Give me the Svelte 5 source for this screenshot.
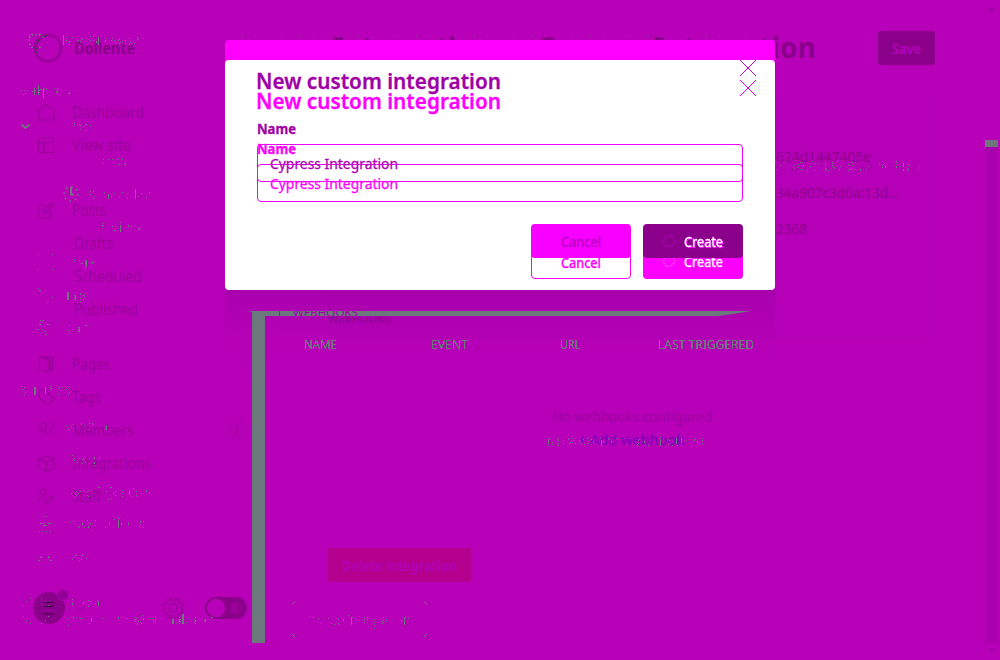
<script>
  const groups = [
    [['Dashboard', 72, 'home'], ['View site', 59, 'site']],
    [['Posts', 34, 'edit'], ['Drafts', 39, ''], ['Scheduled', 68, ''], ['Published', 64, '']],
    [['Pages', 38, 'pages'], ['Tags', 29, 'tag'], ['Members', 62, 'members'], ['Integrations', 79, 'box'], ['Staff', 29, 'staff']]
  ];
  const icons = {
    home: 'M1 6.5 8.5 .5 16 6.5V16H1Z',
    site: 'M2 1H14Q15.500 1 15.500 2.500V14Q15.500 15.500 14 15.500H2Q.5 15.500 .5 14V2.500Q.5 1 2 1ZM.5 5.500H15.500M6 5.500V15.500',
    edit: 'M8 3.500H1V16H13V9M6 11 6.500 8 14 .8 16 2.500 9 10Z',
    pages: 'M1.500 1 10 3.500V16L1.500 14ZM1.500 1H14.500V14H12V4L5 1',
    tag: 'M1 1H7L16 10 9.500 16 1 8Z',
    members: 'M5 1A3.500 3.500 0 1 1 5 8A3.500 3.500 0 1 1 5 1M12 1A3.500 3.500 0 1 1 12 8M1 13Q2 9.500 5 9.500T9 13M11 9.500Q15 9.500 16 13',
    box: 'M8.500 1 16 4V13L8.500 16 1 13V4ZM1 4 8.500 7.500 16 4M8.500 7.500V16',
    staff: 'M5 1A3 3 0 1 1 5 7A3 3 0 1 1 5 1M1 13Q1 9 5 9M7 16 8 12.500 14 8 16 10 10 15.500Z'
  };
  // text, x, baseline, width, size
  const traces = [
    ['My Browser', 62, 45, 84, 14], ['workplaces', 21, 95, 49, 12], ['Posts', 69, 131, 26, 12],
    ['Drafts', 97, 166, 29, 13], ['Scheduled', 88, 199, 64, 13], ['Published', 98, 232, 46, 13],
    ['Pages', 69, 267, 29, 12], ['Tags', 65, 300, 23, 12], ['Team', 62, 332, 29, 12],
    ['SETTINGS', 20, 395, 50, 12], ['General', 61, 430, 50, 13], ['Design', 67, 464, 37, 13],
    ['Code injection', 61, 497, 91, 13], ['Integrations', 63, 528, 82, 14], ['Labs', 67, 561, 21, 13],
    ['Ghost', 65, 607, 37, 13], ['ghost-author@example.com', 64, 624, 153, 13],
    ['71707cb3963.5f.ac94c5...', 775, 171, 156, 14],
    ['No webhooks configured', 546, 446, 159, 14], ['Delete integration', 307, 625, 104, 14]
  ];
  const heads = [['NAME', 304, 33], ['EVENT', 431, 37], ['URL', 560, 20], ['LAST TRIGGERED', 658, 96]];
  const rays = [0, 30, 60, 90, 120, 150, 180, 210, 240, 270, 300, 330];
</script>

{#snippet fit(text, w, h, base, size, weight)}
  <svg class="fit" width={w} height={h}><text x="0" y={base} font-size={size} font-weight={weight} textLength={w} lengthAdjust="spacingAndGlyphs">{text}</text></svg>
{/snippet}

{#snippet modal(kind)}
  <section class="modal {kind}">
    <div class="mhead">
      {@render fit('New custom integration', 245, 80, 49, 22, 600)}
      <svg class="close" width="18" height="18"><path d="M1 1 17 17M17 1 1 17" /></svg>
    </div>
    <div class="mlabel">{@render fit('Name', 39, 24, 14, 14, 700)}</div>
    <div class="field">{@render fit('Cypress Integration', 128, 36, 24, 15, 400)}</div>
    <div class="actions">
      <div class="btn cancel">{@render fit('Cancel', 40, 35, 23, 14, kind === 'first' ? 400 : 500)}</div>
      <div class="btn create">
        <svg class="spin" width="16" height="16" viewBox="-8 -8 16 16">
          {#each rays as r}<path d="M0 -4.500V-6.500" transform="rotate({r})" />{/each}
        </svg>
        {@render fit('Create', 39, 35, 23, 14, 400)}
      </div>
    </div>
  </section>
{/snippet}

<div class="stage">
  <aside>
    <div class="brand">
      <svg width="30" height="30"><circle cx="15" cy="15" r="13.200" fill="none" stroke="#9c009c" stroke-width="2.400" /><path d="M3 16Q4 5 14 2.500M3 20Q7 29 18 28M26 9Q30 17 23 25" fill="none" stroke="#940094" stroke-width="1.500" /><path d="M6 7 4 11M3.500 15v7M10 3h4" stroke="#164b34" stroke-width="1.400" stroke-dasharray="1.500 2" /></svg>
      {@render fit('Doliente', 61, 30, 21, 15.500, 700)}
    </div>
    <nav>
      {#each groups as items}
        <div class="group">
          {#each items as [name, w, icon]}
            <div class="item" class:sub={!icon}>
              <svg class="icon" width="17" height="17">{#if icon}<path d={icons[icon]} />{/if}</svg>
              {@render fit(name, w, 33, 22, 15.500, 400)}
              {#if name === 'Members'}<span class="count">{@render fit('1', 6, 22, 16, 13, 500)}</span>{/if}
            </div>
          {/each}
        </div>
      {/each}
    </nav>
    <footer>
      <svg width="230" height="44">
        <circle cx="17" cy="22" r="16" fill="#8a008a" />
        <circle cx="31" cy="9" r="6" fill="#b900b9" /><circle cx="31" cy="9" r="5.200" fill="#920098" />
        <path d="M12 16.500h10M12 20.500h10M12 28h5m1 0h4" stroke="#380044" /><path d="M12 24.500h10" stroke="#a000a6" />
        <path d="M42 20 48 25 53 20" fill="none" stroke="#9a009a" />
        <g transform="translate(141 22)" fill="none" stroke="#980098" stroke-width="1.300"><circle r="4" /><path d="M-2 -9Q0 -5 2 -9L5 -9Q4 -4 9 -5L10 -2Q5 0 10 2L9 5Q4 4 5 9L2 10Q0 5 -2 10L-5 9Q-4 4 -9 5L-10 2Q-5 0 -10 -2L-9 -5Q-4 -4 -5 -9Z" /></g>
        <rect x="173" y="11" width="42" height="22" rx="11" fill="#8a008a" /><circle cx="184" cy="22" r="9.200" fill="#b900b9" />
        <g transform="translate(203 22)" fill="none" stroke="#a800a8" stroke-width="1.500"><circle r="2.500" />{#each [0, 45, 90, 135, 180, 225, 270, 315] as r}<path d="M0 -4V-6" transform="rotate({r})" />{/each}</g>
      </svg>
    </footer>
  </aside>

  <main>
    <header>
      <div class="title">{@render fit('Integrations', 172, 40, 28, 28, 700)}<svg class="sep" width="12" height="40"><path d="M2 14 8 20 2 26" /></svg>{@render fit('Cypress Integration', 279, 40, 28, 28, 700)}</div>
      <div class="save">{@render fit('Save', 29, 34, 23, 13.500, 600)}</div>
    </header>
    <div class="panel">
      <div class="key">{@render fit('624d1447405e', 95, 36, 24, 14, 400)}</div>
      <div class="key">{@render fit('34a907c3d0a:13d...', 123, 36, 24, 14, 400)}</div>
      <div class="key">{@render fit('2368', 31, 36, 24, 14, 400)}</div>
    </div>
    <div class="hooks">{@render fit('WEBHOOKS', 62, 20, 13, 12, 500)}</div>
    <div class="empty">{@render fit('No webhooks configured', 160, 24, 16, 14.500, 400)}</div>
    <div class="add">{@render fit('+ Add webhook', 106, 22, 15, 14, 500)}</div>
    <div class="delete">{@render fit('Delete integration', 115, 34, 23, 13.500, 600)}</div>
  </main>

  <div class="scroll">
    <svg width="13" height="140"><path d="M3 11 6.500 7 10 11Z" fill="#94009b" /></svg>
    <div class="mark"></div>
    <div class="track"></div>
    <svg width="13" height="17"><path d="M3 6 6.500 10 10 6Z" fill="#9e009e" /></svg>
  </div>

  <div class="shade"></div>
  <svg class="traces" width="1000" height="660">
    <defs>
      <filter id="mid" x="0" y="0" width="1000" height="660" filterUnits="userSpaceOnUse"><feComponentTransfer><feFuncA type="discrete" tableValues="0 0 0 1 0 0 0" /></feComponentTransfer></filter>
      <filter id="strong" x="0" y="0" width="1000" height="660" filterUnits="userSpaceOnUse"><feComponentTransfer><feFuncA type="discrete" tableValues="0 0 .8 1 1 1" /></feComponentTransfer></filter>
    </defs>
    <path d="M250 311H751Q735 314 718 316H265V643H252V312H250Z" fill="#6b797d" />
    <path d="M279.500 311V316" stroke="#8d218d" />
    <svg x="290" y="311" width="72" height="5" class="clip"><text x="3" y="6" font-size="12" textLength="65" lengthAdjust="spacingAndGlyphs" fill="#a000a5">WEBHOOKS</text></svg>
    <g filter="url(#mid)" fill="#6b797d">
      {#each traces as [t, x, y, w, s]}<text {x} {y} font-size={s} textLength={w} lengthAdjust="spacingAndGlyphs">{t}</text>{/each}
      <g fill="none" stroke="#6b797d">
        <circle cx="36" cy="41" r="7" /><circle cx="76" cy="156" r="3" /><circle cx="74" cy="229" r="4.500" />
        <path d="M38 328q6-14 12 0M37 426q8-14 16 0M38 465l14-14M39 528l6-12 6 12M38 562q7-14 14 0" />
        <circle cx="36" cy="611" r="14" />
      </g>
    </g>
    <g class="heads" filter="url(#strong)">
      {#each heads as [t, x, w]}<text {x} y="349" font-size="12" textLength={w} lengthAdjust="spacingAndGlyphs">{t}</text>{/each}
    </g>
    <path d="M29.500 35v12M31 34.500h10M43 36v4M31 47.500h3M39 47.500h3" stroke="#6b797d" stroke-dasharray="2 2" fill="none" />
    <path d="M37 254.500h1M52 254.500h1M37 269.500h1M52 269.500h1M38 288.500h1M39 290.500h2M41 292.500h1M52 297.500h1M47 302.500h1M40 320.500h1M42 320.500h2M37 329.500h2M42 329.500h1M44 331.500h1M45 334.500h2" stroke="#6b797d" />
    <path d="M43 516.500h1M46 516.500h1M40 523.500h2M43 523.500h2M48 523.500h3M43 525.500h4M39 531.500h1M42 531.500h1M46 531.500h1M50 531.500h1" stroke="#6b797d" />
    <path d="M292 604.500 295 601.500M424 601.500 427 604.500M292 634 295 637M424 637 427 634" stroke="#6b797d" />
    <path d="M21.500 124.500 25.500 128 29.500 124.500" fill="none" stroke="#6b797d" stroke-width="1.700" />
    <g fill="none" stroke="#6b797d"><circle cx="71" cy="194" r="7" stroke-width="1.700" stroke-dasharray="1.500 4" /><path d="M71 187V194.500H74" stroke-width="2" /></g>
    <path d="M242 36.500H760" stroke="#5c7e68" stroke-dasharray="1 12 1 25 1 18" opacity=".6" />
  </svg>

  {@render modal('second')}
  {@render modal('first')}
</div>

<style>
  :global(body) { margin: 0; }
  .stage { position: relative; display: flex; width: 1000px; height: 660px; overflow: hidden; background: #b900b9; font-family: "Noto Sans", "Open Sans", sans-serif; }
  svg { display: block; flex: none; overflow: visible; }
  .clip { overflow: hidden; }
  .fit { fill: currentColor; }
  aside { display: flex; flex-direction: column; width: 279px; color: #990099; border-right: 1px solid #b400b4; }
  .brand { display: flex; gap: 11px; height: 63px; padding: 33px 0 0 33px; color: #880088; }
  nav { display: flex; flex-direction: column; }
  .group:nth-child(2) { margin-top: 32px; }
  .group:nth-child(3) { margin-top: 22px; }
  .item { display: flex; align-items: center; height: 33px; padding-left: 38px; gap: 17px; }
  .sub { gap: 19px; }
  .icon { fill: none; stroke: #980098; stroke-width: 1.2; }
  .count { margin-left: auto; width: 24px; margin-right: 30px; display: flex; justify-content: center; background: #b500b5; border-radius: 11px; }
  footer { margin-top: auto; padding: 0 0 30px 32px; }
  main { display: flex; flex-direction: column; width: 705px; }
  header { display: flex; justify-content: space-between; height: 65px; padding: 31px 50px 0 53px; color: #8a008a; }
  .title { display: flex; margin-top: -1px; }
  .sep { margin: 0 10px 0 10px; fill: none; stroke: #8a008a; }
  .save { display: flex; justify-content: center; width: 57px; height: 34px; border-radius: 3px; background: #8a008a; color: #b900c0; }
  .panel { height: 199px; margin: 0 50px 0 48px; padding: 42px 0 0 448px; background: #b600b7; border-bottom: 1px solid #b000b2; color: #8e008e; }
  .key { height: 36px; }
  .hooks { height: 20px; padding-left: 48px; margin-top: -28px; color: #860088; }
  .empty { height: 24px; margin-top: 76px; padding-left: 272px; color: #9c009f; }
  .add { height: 22px; padding-left: 298px; color: #8000b9; }
  .delete { display: flex; justify-content: center; width: 143px; height: 34px; margin: 96px 0 0 48px; border-radius: 3px; background: #b4008c; color: #b100bc; }
  .scroll { display: flex; flex-direction: column; width: 13px; }
  .mark { height: 7px; background: #6b797d; }
  .track { height: 496px; background: #a900ae; }
  .shade { position: absolute; left: 225px; top: 290px; width: 550px; height: 155px; background: linear-gradient(rgba(154, 0, 163, .5), rgba(170, 0, 175, .24) 30%, transparent); }
  .traces { position: absolute; left: 0; top: 0; }
  .heads { fill: #6b797d; }
  .modal { position: absolute; box-sizing: border-box; left: 225px; width: 550px; height: 230px; padding: 0 32px; }
  .modal .fit { stroke: currentColor; stroke-width: .3; }
  .second { top: 60px; background: #fff; border-radius: 4px; color: #f0f; box-shadow: 0 -16px 0 0 #f0f, 0 -20px 0 0 #f0f; }
  .first { top: 40px; color: #a000a6; }
  .mhead { display: flex; justify-content: space-between; margin-left: -1px; height: 80px; }
  .close { margin: 19px -14px 0 0; fill: none; stroke: #d000d5; }
  .second .close { stroke: #f0f; }
  .mlabel { height: 24px; }
  .field { box-sizing: border-box; height: 38px; padding-left: 12px; border: 1px solid #f000f5; border-radius: 4px; color: #ae00b4; }
  .second .field { color: #f0f; }
  .actions { display: flex; justify-content: flex-end; gap: 12px; margin-top: 42px; }
  .btn { box-sizing: border-box; display: flex; justify-content: center; width: 100px; height: 35px; border-radius: 4px; }
  .first .btn { height: 34px; }
  .first .cancel { background: #f700ff; color: #b900c0; }
  .first .create { background: #8a008a; color: #fff; }
  .second .cancel { border: 1px solid #f0f; }
  .second .create { background: #f0f; color: #fff; }
  .spin { margin: 9px 7px 0 -3px; fill: none; stroke: #b800c0; stroke-width: 1.2; }
  .second .spin { stroke: #ff8cff; opacity: .6; }
  .first .create .fit { filter: drop-shadow(1px 1px 0 #f0f); }
</style>
